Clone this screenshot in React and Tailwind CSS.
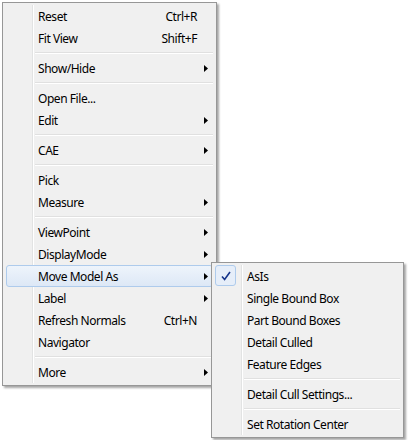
import React from 'react'

const mainItems = [
  { label: 'Reset', shortcut: 'Ctrl+R' },
  { label: 'Fit View', shortcut: 'Shift+F' },
  { sep: true },
  { label: 'Show/Hide', sub: true },
  { sep: true },
  { label: 'Open File...' },
  { label: 'Edit', sub: true },
  { sep: true },
  { label: 'CAE', sub: true },
  { sep: true },
  { label: 'Pick' },
  { label: 'Measure', sub: true },
  { sep: true },
  { label: 'ViewPoint', sub: true },
  { label: 'DisplayMode', sub: true },
  { label: 'Move Model As', sub: true, active: true },
  { label: 'Label', sub: true },
  { label: 'Refresh Normals', shortcut: 'Ctrl+N' },
  { label: 'Navigator' },
  { sep: true },
  { label: 'More', sub: true },
]

const subItems = [
  { label: 'AsIs', checked: true },
  { label: 'Single Bound Box' },
  { label: 'Part Bound Boxes' },
  { label: 'Detail Culled' },
  { label: 'Feature Edges' },
  { sep: true },
  { label: 'Detail Cull Settings...' },
  { sep: true },
  { label: 'Set Rotation Center' },
]

const Arrow = () => (
  <svg width="4" height="7" viewBox="0 0 4 7" className="block">
    <polygon points="0,0 4,3.5 0,7" fill="#000" />
  </svg>
)

const Check = () => (
  <svg width="12" height="12" viewBox="0 0 12 12" className="block">
    <path d="M2 6.5 L4.6 9.5 L10 2" fill="none" stroke="#15338a" strokeWidth="1.6" />
  </svg>
)

const Separator = () => (
  <div className="flex h-[8px] items-center pl-[30px] pr-[1px]">
    <div className="w-full border-t border-t-[#e0e0e0] border-b border-b-white" />
  </div>
)

const MenuRow = ({ item }) => (
  <div className="relative flex h-[22px] items-center">
    {item.active && (
      <div className="absolute inset-x-[1px] inset-y-0 rounded-[3px] border border-[#aecbec] bg-gradient-to-b from-[#eef4fb] to-[#dde8f6]" />
    )}
    {item.checked && (
      <div className="absolute left-[1px] top-0 flex h-[21px] w-[21px] items-center justify-center rounded-[3px] border border-[#aecbec] bg-[#e6eef9]">
        <Check />
      </div>
    )}
    <span className="relative pl-[33px] pt-[1px] whitespace-nowrap">{item.label}</span>
    <span className="relative ml-auto pt-[1px] whitespace-nowrap">{item.shortcut}</span>
    <span className="relative flex w-[17px] justify-center">{item.sub && <Arrow />}</span>
  </div>
)

const Menu = ({ items, className }) => (
  <div className={`border border-[#979797] bg-[#f0f0f0] p-[2px] shadow-[2px_2px_2px_rgba(0,0,0,0.35)] ${className}`}>
    <div className="relative">
      <div className="absolute inset-y-0 left-[27px] w-[2px] border-l border-l-[#e2e3e3] border-r border-r-white" />
      {items.map((item, i) => (item.sep ? <Separator key={i} /> : <MenuRow key={i} item={item} />))}
    </div>
  </div>
)

export default function App() {
  return (
    <div className="relative h-[440px] w-[409px] bg-white text-[12px] tracking-[-0.45px] text-black" style={{ fontFamily: '"Noto Sans", "Open Sans", sans-serif' }}>
      <div className="pl-[2px] pt-[2px]">
        <Menu items={mainItems} className="w-[215px]" />
      </div>
      <Menu items={subItems} className="absolute left-[211px] top-[262px] w-[193px]" />
    </div>
  )
}
